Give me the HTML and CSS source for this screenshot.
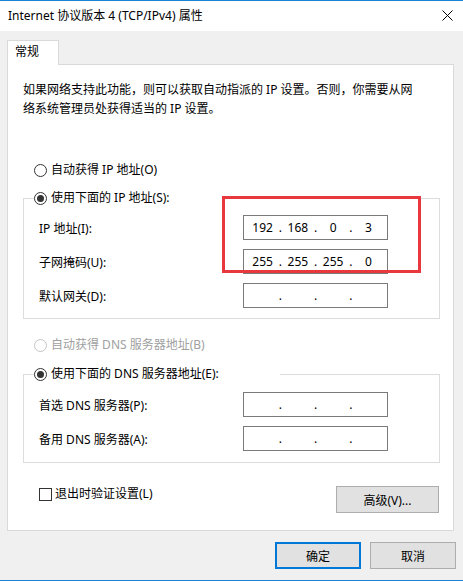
FILE: index.html
```html
<!DOCTYPE html>
<html lang="zh-CN">
<head>
<meta charset="utf-8">
<title>Internet 协议版本 4 (TCP/IPv4) 属性</title>
<link rel="stylesheet" href="styles.css">
</head>
<body>
<div class="window">
  <div class="titlebar">
    <span class="title">Internet 协议版本 4 (TCP/IPv4) 属性</span>
    <svg class="close" width="11" height="11" viewBox="0 0 11 11"><path d="M0.5 0.5 L10.5 10.5 M10.5 0.5 L0.5 10.5" stroke="#000" stroke-width="1" fill="none"/></svg>
  </div>
  <div class="content">
    <div class="tabs"><div class="tab">常规</div></div>
    <div class="panel">
      <p class="desc">如果网络支持此功能，则可以获取自动指派的 IP 设置。否则，你需要从网<br>络系统管理员处获得适当的 IP 设置。</p>

      <div class="radio first"><span class="circle"></span>自动获得 IP 地址(O)</div>

      <fieldset class="group g1">
        <legend class="radio"><span class="circle checked"></span>使用下面的 IP 地址(S):</legend>
        <div class="rows">
          <span class="label">IP 地址(I):</span>
          <div class="ipbox"><span>192</span><i>.</i><span>168</span><i>.</i><span>0</span><i>.</i><span>3</span></div>
          <span class="label">子网掩码(U):</span>
          <div class="ipbox"><span>255</span><i>.</i><span>255</span><i>.</i><span>255</span><i>.</i><span>0</span></div>
          <span class="label">默认网关(D):</span>
          <div class="ipbox"><span></span><i>.</i><span></span><i>.</i><span></span><i>.</i><span></span></div>
          <div class="highlight"></div>
        </div>
      </fieldset>

      <div class="radio disabled second"><span class="circle"></span>自动获得 DNS 服务器地址(B)</div>

      <fieldset class="group g2">
        <legend class="radio"><span class="circle checked"></span>使用下面的 DNS 服务器地址(E):</legend>
        <div class="rows">
          <span class="label">首选 DNS 服务器(P):</span>
          <div class="ipbox"><span></span><i>.</i><span></span><i>.</i><span></span><i>.</i><span></span></div>
          <span class="label">备用 DNS 服务器(A):</span>
          <div class="ipbox"><span></span><i>.</i><span></span><i>.</i><span></span><i>.</i><span></span></div>
        </div>
      </fieldset>

      <div class="options">
        <div class="check"><span class="box"></span>退出时验证设置(L)</div>
        <div class="btn adv">高级(V)...</div>
      </div>
    </div>
    <div class="footer">
      <div class="btn ok">确定</div>
      <div class="btn">取消</div>
    </div>
  </div>
</div>
</body>
</html>
```

FILE: styles.css
```css
html, body {
  margin: 0;
  padding: 0;
}
body {
  width: 463px;
  height: 581px;
  overflow: hidden;
  background: #f0f0f0;
  font-family: "Noto Sans", "Noto Sans CJK SC", sans-serif;
  font-size: 12px;
  color: #000;
}
.window {
  box-sizing: border-box;
  height: 581px;
  border-top: 1px solid #1a83d6;
  border-bottom: 1px solid #1a83d6;
  background: #f0f0f0;
}
.titlebar {
  height: 30px;
  background: #fff;
  display: flex;
  align-items: center;
  justify-content: space-between;
  padding: 0 10px 0 8px;
}
.title {
  line-height: 30px;
}
.close {
  display: block;
  margin-top: -1px;
}
.content {
  padding: 9px 9px 0 7px;
}
.tabs {
  display: flex;
  position: relative;
  z-index: 1;
  margin-bottom: -1px;
}
.tab {
  box-sizing: border-box;
  width: 52px;
  height: 25px;
  border: 1px solid #d9d9d9;
  border-bottom: none;
  background: #fff;
  padding-left: 7px;
  line-height: 22px;
}
.panel {
  box-sizing: border-box;
  height: 467px;
  border: 1px solid #d9d9d9;
  background: #fff;
  padding-top: 15px;
}
.desc {
  margin: 0 0 0 15px;
  line-height: 19px;
  white-space: nowrap;
}
.radio {
  display: flex;
  align-items: center;
  height: 18px;
  line-height: 18px;
  white-space: nowrap;
}
.radio.first {
  margin: 43px 0 0 26px;
}
.radio.second {
  margin: 17px 0 0 26px;
}
.circle {
  box-sizing: border-box;
  width: 13px;
  height: 13px;
  border: 1px solid #333;
  border-radius: 50%;
  background: #fff;
  margin-right: 4px;
  display: flex;
  align-items: center;
  justify-content: center;
  flex: none;
}
.circle.checked::after {
  content: "";
  width: 7px;
  height: 7px;
  border-radius: 50%;
  background: #333;
}
.radio.disabled {
  color: #a0a0a0;
}
.radio.disabled .circle {
  border-color: #c4c4c4;
}
.group {
  margin: 10px 13px 0 15px;
  padding: 0;
  border: 1px solid #dcdcdc;
  min-width: 0;
}
.group.g2 {
  margin-top: 11px;
}
.group legend {
  padding: 0;
  margin-left: 10px;
  box-sizing: border-box;
}
.g1 legend {
  width: 200px;
}
.g2 legend {
  width: 246px;
}
.rows {
  position: relative;
  display: grid;
  grid-template-columns: 1fr 145px;
  row-gap: 9px;
  align-items: center;
  padding: 8px 51px 10px 15px;
}
.g2 .rows {
  padding: 9px 51px 11px 15px;
}
.label {
  white-space: nowrap;
}
.ipbox {
  box-sizing: border-box;
  height: 25px;
  border: 1px solid #7a7a7a;
  background: #fff;
  padding: 0 3px;
  display: grid;
  grid-template-columns: 1fr 4px 1fr 4px 1fr 4px 1fr;
  align-items: center;
  line-height: 23px;
}
.ipbox span {
  text-align: center;
}
.ipbox i {
  font-style: normal;
  text-align: center;
  display: flex;
  justify-content: center;
}
.highlight {
  position: absolute;
  left: 198px;
  top: -11px;
  width: 199px;
  height: 77px;
  box-sizing: border-box;
  border: 3px solid #e8383d;
  pointer-events: none;
}
.options {
  display: flex;
  justify-content: space-between;
  align-items: flex-start;
  margin: 23px 14px 0 31px;
}
.check {
  display: flex;
  align-items: center;
  height: 18px;
  line-height: 18px;
  margin-top: -1px;
}
.box {
  box-sizing: border-box;
  width: 13px;
  height: 13px;
  border: 1px solid #333;
  background: #fff;
  margin-right: 3px;
}
.btn {
  box-sizing: border-box;
  width: 86px;
  height: 27px;
  border: 1px solid #adadad;
  background: #e1e1e1;
  display: flex;
  align-items: center;
  justify-content: center;
}
.btn.adv {
  width: 103px;
}
.btn.ok {
  border: 2px solid #0078d7;
}
.footer {
  display: flex;
  justify-content: flex-end;
  gap: 9px;
  margin: 11px -2px 0 0;
}
```
